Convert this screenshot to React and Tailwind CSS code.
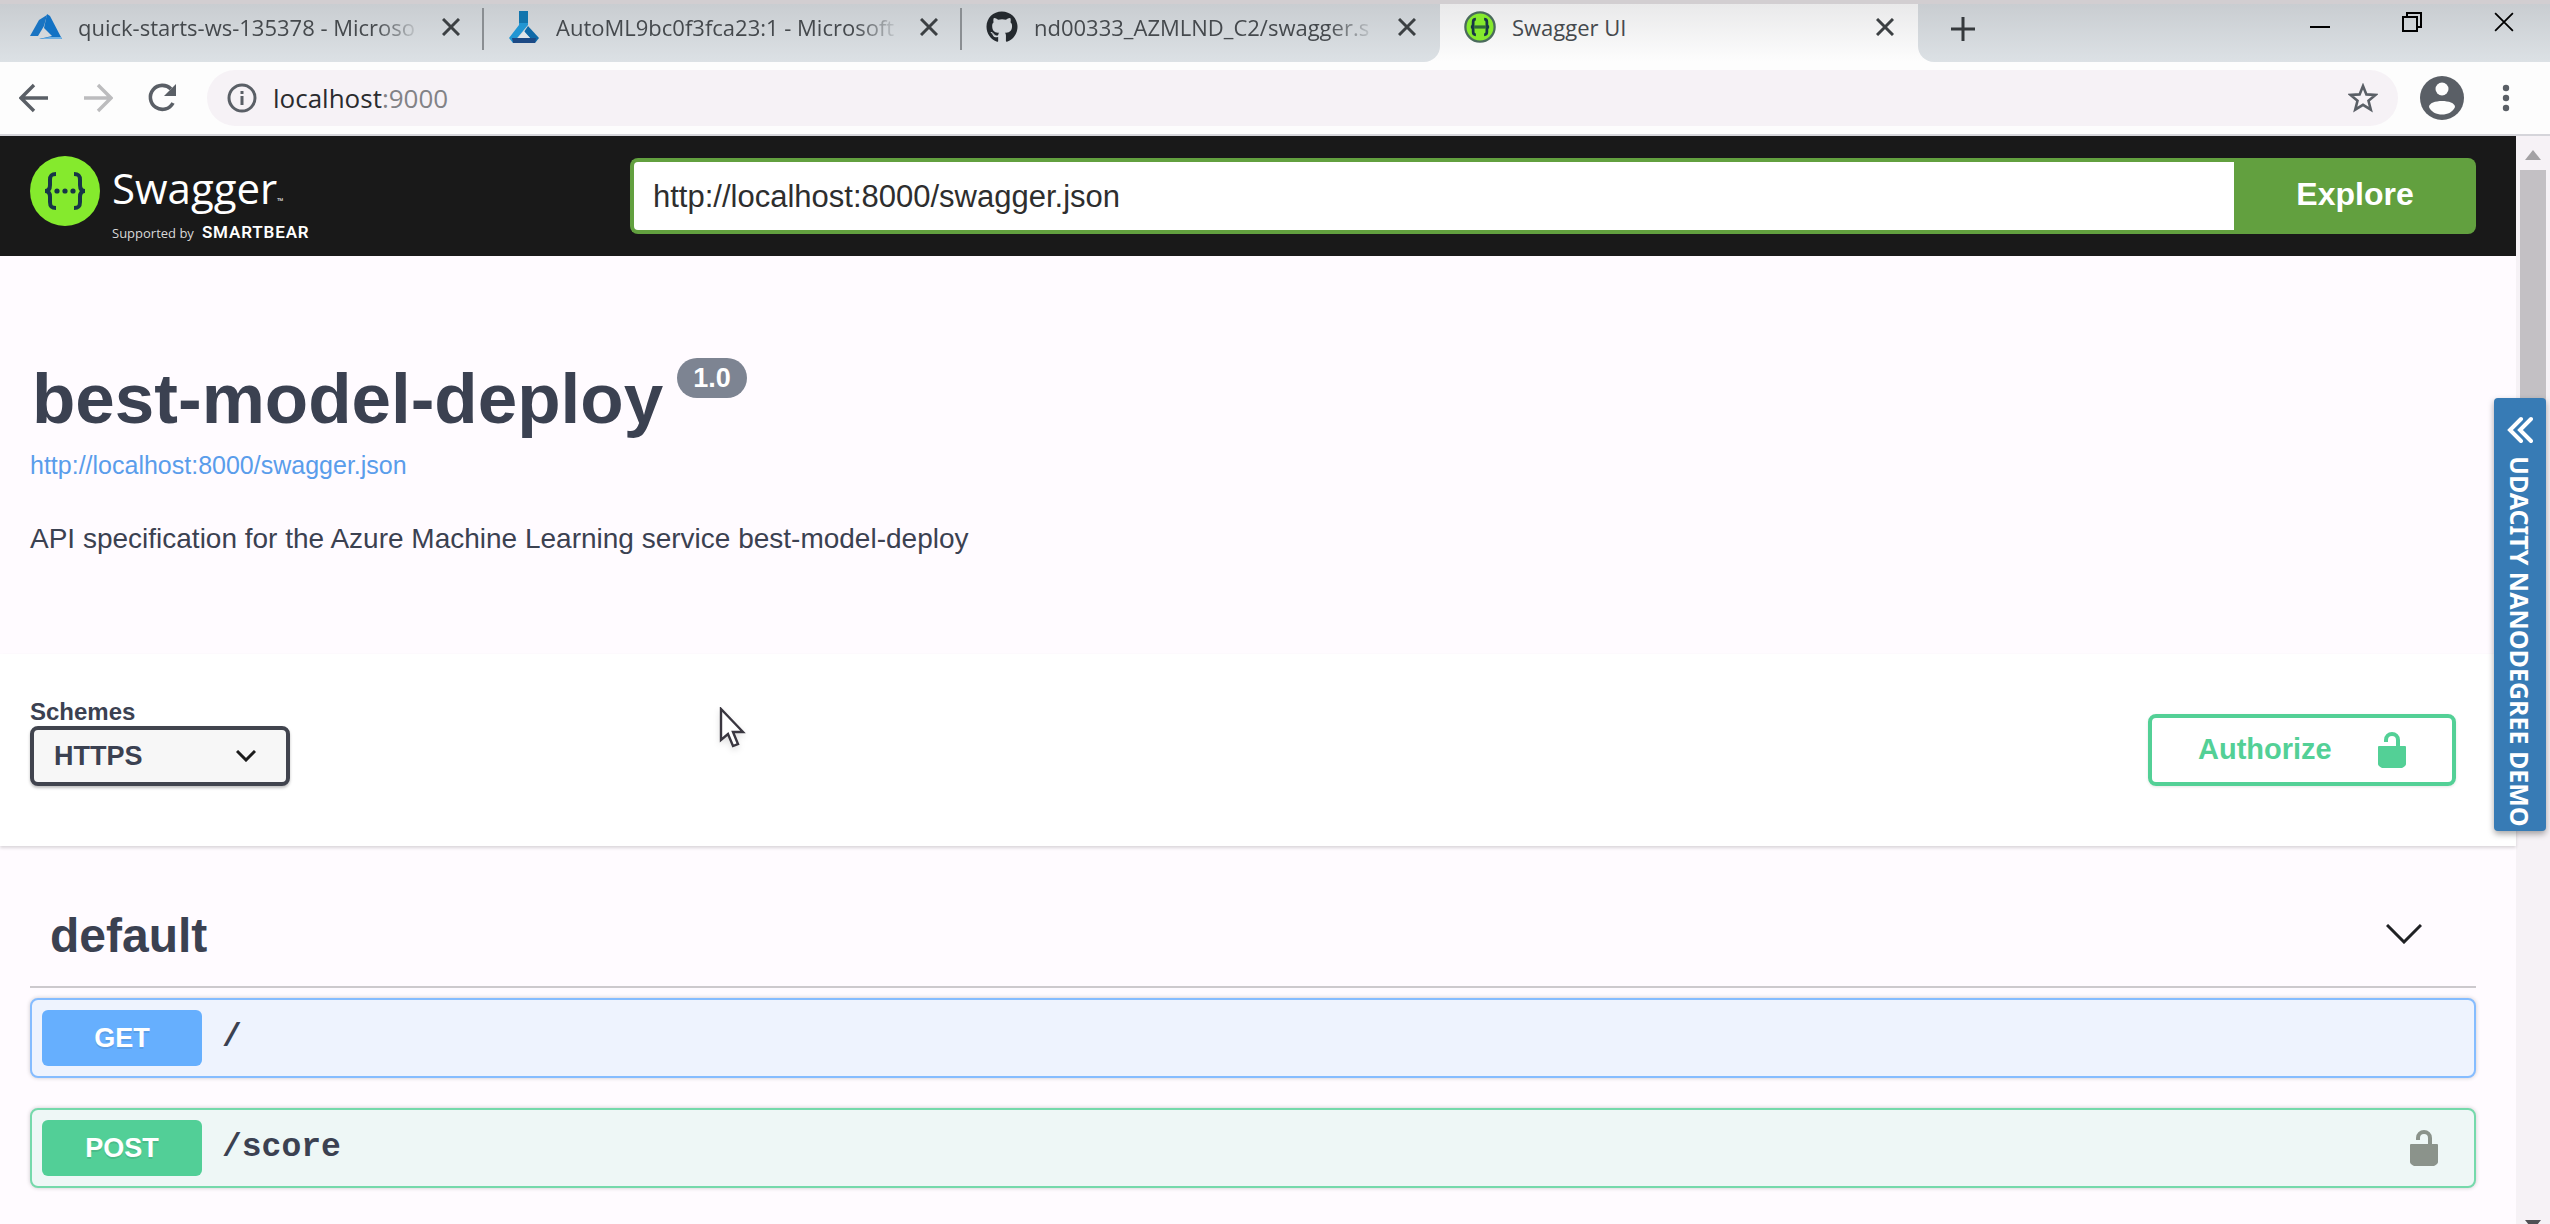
import React from "react";
import { FaGithub } from "react-icons/fa";

function AzureIcon() {
  return (
    <svg viewBox="0 0 32 28" className="h-7 w-8 shrink-0" aria-hidden="true">
      <path d="M17 2 L9 7 L0 23 H8 L14 13 Z" fill="#1a74c2" />
      <path d="M17 1 L20 3 L32 26 H9 L22 23 L14 15 Z" fill="#1272c4" />
      <path d="M9 26 L20 24 H31 L32 26 Z" fill="#6fb0e2" />
    </svg>
  );
}

function FlaskIcon() {
  return (
    <svg viewBox="0 0 30 32" className="h-8 w-8 shrink-0" aria-hidden="true">
      <path d="M10 0 H19 V14 L9 26 L4 32 L0 27 L10 14 Z" fill="#2196d3" />
      <path d="M10 0 H19 V12 H10 Z" fill="#1275ad" />
      <path d="M19 15 L30 27 L26 32 L15 21 Z" fill="#0f6aa8" />
      <path d="M3 27 H27 L26 32 H4 Z" fill="#1c4a85" />
      <path d="M15 20 L21 27 H9 Z" fill="#dfe6ea" />
    </svg>
  );
}

function SwaggerMark({ className, ring }) {
  return (
    <svg viewBox="0 0 70 70" className={className} aria-hidden="true">
      <circle cx="35" cy="35" r={ring ? 32 : 35} fill="#85ea2d" stroke={ring ? "#4a6b5c" : "none"} strokeWidth={ring ? 5 : 0} />
      <g fill="none" stroke="#173647" strokeWidth={ring ? 6 : 4}>
        <path d="M26 18 c-5 0 -6 2 -6 6 v5 c0 4 -2 6 -5 6 c3 0 5 2 5 6 v5 c0 4 1 6 6 6" />
        <path d="M44 18 c5 0 6 2 6 6 v5 c0 4 2 6 5 6 c-3 0 -5 2 -5 6 v5 c0 4 -1 6 -6 6" />
      </g>
      {ring ? (
        <path d="M22 35 H48" stroke="#2f6a3a" strokeWidth="7" />
      ) : (
        <g fill="#173647">
          <circle cx="27" cy="35" r="2.6" />
          <circle cx="35" cy="35" r="2.6" />
          <circle cx="43" cy="35" r="2.6" />
        </g>
      )}
    </svg>
  );
}

function LockIcon({ className }) {
  return (
    <svg viewBox="0 0 28 36" className={className} aria-hidden="true">
      <path d="M8 10 V8 a6 6 0 0 1 12 0 v8" fill="none" stroke="currentColor" strokeWidth="4" />
      <path d="M1 14 H27 Q28 14 28 15 V32 Q28 34 24 36 H4 Q0 34 0 32 V15 Q0 14 1 14 Z" fill="currentColor" />
    </svg>
  );
}

function CloseIcon({ className }) {
  return (
    <svg viewBox="0 0 18 18" className={className} fill="none" stroke="currentColor" aria-hidden="true">
      <path d="M1 1 L17 17 M17 1 L1 17" />
    </svg>
  );
}

function Tab({ icon, title, active, divided }) {
  return (
    <div className="relative flex w-[478px] items-center px-6 pb-3">
      {icon}
      <span className="ml-4 flex-1">
        <span
          className={
            active
              ? "block w-fit font-['Open_Sans',sans-serif] text-[22px] leading-8 whitespace-nowrap text-[#45494d]"
              : "block w-fit font-['Open_Sans',sans-serif] text-[22px] leading-8 whitespace-nowrap text-[#45494d] [mask-image:linear-gradient(to_right,black_88%,rgba(0,0,0,0.15))]"
          }
        >
          {title}
        </span>
      </span>
      <button type="button" aria-label={"Close " + title} className="text-[#3c4043]">
        <CloseIcon className="size-[18px] stroke-[3]" />
      </button>
      {divided && <span className="absolute top-1 right-0 h-[42px] w-[2px] bg-[#8a8e92]" />}
    </div>
  );
}

function TabStrip() {
  return (
    <div className="flex h-[62px] items-stretch border-t-4 border-[#d2ced1] bg-linear-to-b from-[#e9e9ea] to-[#fdfdfd]">
      <div className="flex rounded-br-2xl bg-linear-to-b from-[#c9cdd1] to-[#dce1e5] pl-[6px]">
        <Tab divided icon={<AzureIcon />} title="quick-starts-ws-135378 - Microso" />
        <Tab divided icon={<FlaskIcon />} title="AutoML9bc0f3fca23:1 - Microsoft" />
        <Tab icon={<FaGithub className="size-8 shrink-0 text-[#24292e]" />} title="nd00333_AZMLND_C2/swagger.s" />
      </div>
      <Tab active icon={<SwaggerMark ring className="size-8 shrink-0" />} title="Swagger UI" />
      <div className="flex flex-1 items-start rounded-bl-2xl bg-linear-to-b from-[#c9cdd1] to-[#dce1e5] pt-2">
        <button type="button" aria-label="New tab" className="ml-8 pt-1 text-[#35393c]">
          <svg viewBox="0 0 26 26" className="size-[26px]" fill="none" stroke="currentColor" strokeWidth="3" aria-hidden="true">
            <path d="M13 1 V25 M1 13 H25" />
          </svg>
        </button>
        <div className="ml-auto flex items-start gap-[72px] pr-9 text-black">
          <button type="button" aria-label="Minimize">
            <svg viewBox="0 0 20 20" className="size-5" aria-hidden="true">
              <path d="M0 15 H20" stroke="currentColor" strokeWidth="2" />
            </svg>
          </button>
          <button type="button" aria-label="Restore">
            <svg viewBox="0 0 20 20" className="size-5" fill="none" stroke="currentColor" strokeWidth="2" aria-hidden="true">
              <path d="M1 5 H15 V19 H1 Z M5 5 V1 H19 V15 H15" />
            </svg>
          </button>
          <button type="button" aria-label="Close window">
            <CloseIcon className="size-5 stroke-[1.6]" />
          </button>
        </div>
      </div>
    </div>
  );
}

function Toolbar() {
  return (
    <div className="flex h-[74px] items-center border-b-2 border-[#d5d5da] bg-[#fdfdfd] pr-[38px] pl-[19px] text-[#5a5f66]">
      <button type="button" aria-label="Back">
        <svg viewBox="0 0 30 30" className="size-[30px]" fill="none" stroke="currentColor" strokeWidth="3.4" aria-hidden="true">
          <path d="M15 2 L2 15 L15 28 M2 15 H29" />
        </svg>
      </button>
      <button type="button" aria-label="Forward" className="ml-[34px] text-[#bcbcbe]">
        <svg viewBox="0 0 30 30" className="size-[30px]" fill="none" stroke="currentColor" strokeWidth="3.4" aria-hidden="true">
          <path d="M15 2 L28 15 L15 28 M28 15 H1" />
        </svg>
      </button>
      <button type="button" aria-label="Reload" className="ml-[34px]">
        <svg viewBox="0 0 30 30" className="size-[30px]" aria-hidden="true">
          <path d="M26 20 A12 12 0 1 1 24 6" fill="none" stroke="currentColor" strokeWidth="3.6" />
          <path d="M29 1 V13 H17 Z" fill="currentColor" />
        </svg>
      </button>
      <div className="ml-[30px] flex h-14 flex-1 items-center rounded-full bg-[#f6f2f6] px-5">
        <svg viewBox="0 0 30 30" className="size-[30px]" aria-hidden="true">
          <circle cx="15" cy="15" r="13" fill="none" stroke="currentColor" strokeWidth="3" />
          <path d="M15 13 V22 M15 8 V11" stroke="currentColor" strokeWidth="3" />
        </svg>
        <span className="ml-4 flex-1 font-['Open_Sans',sans-serif] text-[26px] leading-8 text-[#828286]">
          <span className="text-[#2a2b2e]">localhost</span>:9000
        </span>
        <button type="button" aria-label="Bookmark">
          <svg viewBox="0 0 30 30" className="size-[30px]" fill="none" stroke="currentColor" strokeWidth="2.6" aria-hidden="true">
            <path d="M15 3 L18.4 11.4 L27.5 12 L20.5 17.8 L22.8 26.6 L15 21.8 L7.2 26.6 L9.5 17.8 L2.5 12 L11.6 11.4 Z" />
          </svg>
        </button>
      </div>
      <button type="button" aria-label="Profile" className="ml-[22px]">
        <svg viewBox="0 0 44 44" className="size-11" aria-hidden="true">
          <circle cx="22" cy="22" r="22" fill="currentColor" />
          <circle cx="22" cy="13" r="6.5" fill="#fdfdfd" />
          <path d="M9 31 C9 23 35 23 35 31 C31 41 13 41 9 31 Z" fill="#fdfdfd" />
        </svg>
      </button>
      <button type="button" aria-label="Menu" className="ml-9">
        <svg viewBox="0 0 12 28" className="h-7 w-3" fill="currentColor" aria-hidden="true">
          <circle cx="6" cy="4" r="3.2" />
          <circle cx="6" cy="14" r="3.2" />
          <circle cx="6" cy="24" r="3.2" />
        </svg>
      </button>
    </div>
  );
}

function SwaggerHeader() {
  return (
    <header className="flex h-[120px] items-center bg-[#191919] pr-10 pl-[30px]">
      <a href="#top" className="flex w-[600px] items-start pt-1">
        <SwaggerMark className="mt-1 size-[70px] shrink-0" />
        <span className="ml-3 flex flex-col pt-4 font-['Open_Sans',sans-serif] text-white">
          <span className="text-[42px] leading-10">
            Swagger<span className="text-[8px]">™</span>
          </span>
          <span className="flex items-baseline gap-2 text-[13px] leading-6 text-[#d8d8d8]">
            Supported by
            <span className="font-['Roboto',sans-serif] text-[17px] leading-5 font-semibold tracking-wider text-white">SMARTBEAR</span>
          </span>
        </span>
      </a>
      <form className="flex h-[76px] flex-1" onSubmit={(e) => e.preventDefault()}>
        <input
          type="text"
          aria-label="Specification URL"
          defaultValue="http://localhost:8000/swagger.json"
          className="min-w-0 flex-1 rounded-l-lg border-4 border-r-0 border-[#62a03f] bg-white px-[19px] pt-[2px] text-[31px] text-[#2e2e2e] outline-none"
        />
        <button type="submit" className="w-[242px] rounded-r-lg bg-[#62a03f] pb-1 text-[32px] font-bold text-white">
          Explore
        </button>
      </form>
    </header>
  );
}

function Operation({ method, path, locked, box, badge }) {
  return (
    <div className={"flex h-20 items-center rounded-lg border-2 px-[10px] shadow-[0_0_4px_rgba(0,0,0,0.2)] " + box}>
      <button
        type="button"
        className={"h-14 w-40 rounded-md text-[27px] font-bold text-white [text-shadow:0_2px_0_rgba(0,0,0,0.1)] " + badge}
      >
        {method}
      </button>
      <span className="flex-1 pl-5 font-['Liberation_Mono',monospace] text-[33px] leading-10 font-bold">{path}</span>
      {locked && (
        <button type="button" aria-label="Authorization" className="mr-[26px] text-[#8b938b]">
          <LockIcon className="h-9 w-7" />
        </button>
      )}
    </div>
  );
}

function SideTab() {
  return (
    <button
      type="button"
      className="absolute top-[398px] right-1 flex w-[52px] flex-col items-center rounded bg-[#377bb5] pt-[18px] pb-1 text-white shadow-[0_3px_6px_rgba(0,0,0,0.35)]"
    >
      <svg viewBox="0 0 26 28" className="h-7 w-[26px]" fill="none" stroke="currentColor" strokeWidth="4" strokeLinecap="round" aria-hidden="true">
        <path d="M14 3 L3 14 L14 25 M24 3 L13 14 L24 25" />
      </svg>
      <span className="mt-3 font-['Noto_Sans',sans-serif] text-[25px] leading-[52px] font-bold whitespace-nowrap [writing-mode:vertical-rl]">
        UDACITY NANODEGREE DEMO
      </span>
    </button>
  );
}

function Scrollbar() {
  return (
    <div className="flex w-[34px] shrink-0 flex-col items-center bg-[#f6f2f6]">
      <svg viewBox="0 0 16 10" className="mt-[14px] h-[10px] w-4" aria-hidden="true">
        <path d="M8 0 L16 10 H0 Z" fill="#a3a1a4" />
      </svg>
      <div className="mt-[10px] h-[560px] w-[26px] bg-[#c3c0c4]" />
      <svg viewBox="0 0 16 10" className="mt-auto h-1 w-4" preserveAspectRatio="xMidYMin slice" aria-hidden="true">
        <path d="M0 0 H16 L8 10 Z" fill="#505054" />
      </svg>
    </div>
  );
}

export default function App() {
  return (
    <div id="top" className="relative flex min-h-screen flex-col overflow-hidden bg-[#fffbff] font-['Liberation_Sans',sans-serif] text-[#3b4151]">
      <TabStrip />
      <Toolbar />
      <div className="flex flex-1">
        <div className="min-w-0 flex-1">
          <SwaggerHeader />
          <section className="h-[398px] pt-[102px] pl-[30px]">
            <div className="flex items-start">
              <h1 className="pl-[2px] text-[71px] leading-[82px] font-bold">best-model-deploy</h1>
              <span className="ml-[14px] flex h-10 items-center rounded-full bg-[#7d8492] px-4 text-[27px] font-bold text-white">1.0</span>
            </div>
            <a href="#spec" className="mt-[7px] block text-[25px] leading-9 text-[#5a9deb]">
              http://localhost:8000/swagger.json
            </a>
            <p className="mt-9 text-[28px] leading-10">
              API specification for the Azure Machine Learning service best-model-deploy
            </p>
          </section>
          <section className="relative flex h-48 items-start justify-between bg-white pr-[60px] pl-[30px] shadow-[0_2px_3px_rgba(0,0,0,0.15)]">
            <div className="pt-11">
              <label htmlFor="schemes" className="block text-[24px] leading-7 font-bold">
                Schemes
              </label>
              <div className="relative">
                <select
                  id="schemes"
                  className="block h-[60px] w-[260px] appearance-none rounded-lg border-4 border-[#41444e] bg-[#f7f7f7] pl-5 text-[27px] font-bold shadow-[0_2px_3px_rgba(0,0,0,0.25)]"
                >
                  <option>HTTPS</option>
                </select>
                <svg viewBox="0 0 20 12" className="pointer-events-none absolute top-6 right-[34px] h-3 w-5" fill="none" stroke="#1c1c1c" strokeWidth="3" aria-hidden="true">
                  <path d="M1 1 L10 10 L19 1" />
                </svg>
              </div>
            </div>
            <button
              type="button"
              className="mt-[60px] flex h-[72px] w-[308px] items-center justify-between rounded-lg border-4 border-[#53d096] px-[46px] text-[#53d096] shadow-[0_1px_3px_rgba(0,0,0,0.1)]"
            >
              <span className="text-[29px] font-bold">Authorize</span>
              <LockIcon className="h-9 w-7" />
            </button>
            <svg viewBox="0 0 28 42" className="absolute top-[53px] left-[719px] h-[42px] w-7 drop-shadow-md" aria-hidden="true">
              <path d="M2 2 V33 L9 27 L14 39 L19 37 L14 25 L24 25 Z" fill="#fff" stroke="#3a3740" strokeWidth="2.4" />
            </svg>
          </section>
          <section className="pr-10 pb-9 pl-[30px]">
            <div className="flex h-[142px] items-center justify-between border-b-2 border-[#ccc9cd] pt-9 pr-[54px] pl-5">
              <h2 className="pt-1 text-[48px] leading-[54px] font-bold">default</h2>
              <button type="button" aria-label="Collapse default">
                <svg viewBox="0 0 36 20" className="h-5 w-9" fill="none" stroke="#202124" strokeWidth="3" aria-hidden="true">
                  <path d="M1 1 L18 18 L35 1" />
                </svg>
              </button>
            </div>
            <div className="mt-[10px] flex flex-col gap-[30px]">
              <Operation method="GET" path="/" box="border-[#85bcff] bg-[#eef3fe]" badge="bg-[#66affe]" />
              <Operation method="POST" path="/score" locked box="border-[#75d9ab] bg-[#eef7f6]" badge="bg-[#52cf97]" />
            </div>
          </section>
        </div>
        <Scrollbar />
      </div>
      <SideTab />
    </div>
  );
}
